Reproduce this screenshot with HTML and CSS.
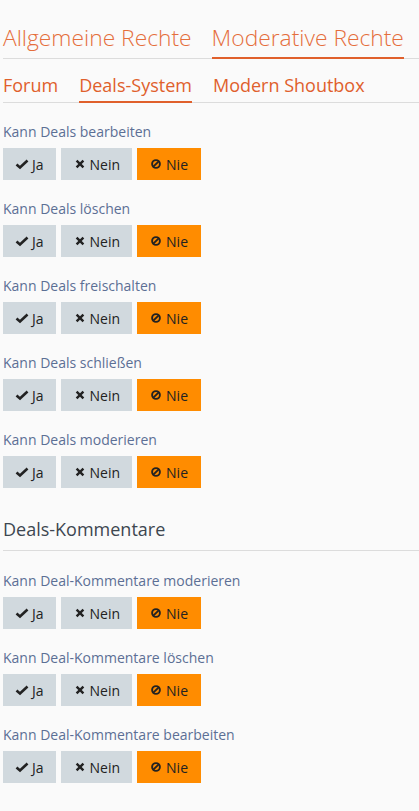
FILE: index.html
```html
<!DOCTYPE html>
<html lang="de">
<head>
<meta charset="utf-8">
<title>Rechte</title>
<link rel="stylesheet" href="styles.css">
</head>
<body>
<div class="page">
  <ul class="tabs tabs-main">
    <li class="tab">Allgemeine Rechte</li>
    <li class="tab active">Moderative Rechte</li>
  </ul>
  <ul class="tabs tabs-sub">
    <li class="tab">Forum</li>
    <li class="tab active">Deals-System</li>
    <li class="tab">Modern Shoutbox</li>
  </ul>

  <div class="section">
    <div class="perm">
      <div class="perm-label">Kann Deals bearbeiten</div>
      <div class="btns">
        <span class="btn"><svg class="ico" viewBox="0 0 14 14"><polyline points="1.5,7.5 5,10.5 12.5,3.5" fill="none" stroke="#222" stroke-width="2.6"/></svg>Ja</span>
        <span class="btn"><svg class="ico" viewBox="0 0 14 14"><path d="M3.6 3.6 L10.4 10.4 M10.4 3.6 L3.6 10.4" stroke="#222" stroke-width="2.4" fill="none"/></svg>Nein</span>
        <span class="btn btn-nie"><svg class="ico" viewBox="0 0 14 14"><circle cx="7" cy="7" r="3.9" fill="none" stroke="#222" stroke-width="1.9"/><path d="M4.3 9.7 L9.7 4.3" stroke="#222" stroke-width="1.9"/></svg>Nie</span>
      </div>
    </div>
    <div class="perm">
      <div class="perm-label">Kann Deals löschen</div>
      <div class="btns">
        <span class="btn"><svg class="ico" viewBox="0 0 14 14"><polyline points="1.5,7.5 5,10.5 12.5,3.5" fill="none" stroke="#222" stroke-width="2.6"/></svg>Ja</span>
        <span class="btn"><svg class="ico" viewBox="0 0 14 14"><path d="M3.6 3.6 L10.4 10.4 M10.4 3.6 L3.6 10.4" stroke="#222" stroke-width="2.4" fill="none"/></svg>Nein</span>
        <span class="btn btn-nie"><svg class="ico" viewBox="0 0 14 14"><circle cx="7" cy="7" r="3.9" fill="none" stroke="#222" stroke-width="1.9"/><path d="M4.3 9.7 L9.7 4.3" stroke="#222" stroke-width="1.9"/></svg>Nie</span>
      </div>
    </div>
    <div class="perm">
      <div class="perm-label">Kann Deals freischalten</div>
      <div class="btns">
        <span class="btn"><svg class="ico" viewBox="0 0 14 14"><polyline points="1.5,7.5 5,10.5 12.5,3.5" fill="none" stroke="#222" stroke-width="2.6"/></svg>Ja</span>
        <span class="btn"><svg class="ico" viewBox="0 0 14 14"><path d="M3.6 3.6 L10.4 10.4 M10.4 3.6 L3.6 10.4" stroke="#222" stroke-width="2.4" fill="none"/></svg>Nein</span>
        <span class="btn btn-nie"><svg class="ico" viewBox="0 0 14 14"><circle cx="7" cy="7" r="3.9" fill="none" stroke="#222" stroke-width="1.9"/><path d="M4.3 9.7 L9.7 4.3" stroke="#222" stroke-width="1.9"/></svg>Nie</span>
      </div>
    </div>
    <div class="perm">
      <div class="perm-label">Kann Deals schließen</div>
      <div class="btns">
        <span class="btn"><svg class="ico" viewBox="0 0 14 14"><polyline points="1.5,7.5 5,10.5 12.5,3.5" fill="none" stroke="#222" stroke-width="2.6"/></svg>Ja</span>
        <span class="btn"><svg class="ico" viewBox="0 0 14 14"><path d="M3.6 3.6 L10.4 10.4 M10.4 3.6 L3.6 10.4" stroke="#222" stroke-width="2.4" fill="none"/></svg>Nein</span>
        <span class="btn btn-nie"><svg class="ico" viewBox="0 0 14 14"><circle cx="7" cy="7" r="3.9" fill="none" stroke="#222" stroke-width="1.9"/><path d="M4.3 9.7 L9.7 4.3" stroke="#222" stroke-width="1.9"/></svg>Nie</span>
      </div>
    </div>
    <div class="perm">
      <div class="perm-label">Kann Deals moderieren</div>
      <div class="btns">
        <span class="btn"><svg class="ico" viewBox="0 0 14 14"><polyline points="1.5,7.5 5,10.5 12.5,3.5" fill="none" stroke="#222" stroke-width="2.6"/></svg>Ja</span>
        <span class="btn"><svg class="ico" viewBox="0 0 14 14"><path d="M3.6 3.6 L10.4 10.4 M10.4 3.6 L3.6 10.4" stroke="#222" stroke-width="2.4" fill="none"/></svg>Nein</span>
        <span class="btn btn-nie"><svg class="ico" viewBox="0 0 14 14"><circle cx="7" cy="7" r="3.9" fill="none" stroke="#222" stroke-width="1.9"/><path d="M4.3 9.7 L9.7 4.3" stroke="#222" stroke-width="1.9"/></svg>Nie</span>
      </div>
    </div>
  </div>

  <h3 class="section-title">Deals-Kommentare</h3>

  <div class="section">
    <div class="perm">
      <div class="perm-label">Kann Deal-Kommentare moderieren</div>
      <div class="btns">
        <span class="btn"><svg class="ico" viewBox="0 0 14 14"><polyline points="1.5,7.5 5,10.5 12.5,3.5" fill="none" stroke="#222" stroke-width="2.6"/></svg>Ja</span>
        <span class="btn"><svg class="ico" viewBox="0 0 14 14"><path d="M3.6 3.6 L10.4 10.4 M10.4 3.6 L3.6 10.4" stroke="#222" stroke-width="2.4" fill="none"/></svg>Nein</span>
        <span class="btn btn-nie"><svg class="ico" viewBox="0 0 14 14"><circle cx="7" cy="7" r="3.9" fill="none" stroke="#222" stroke-width="1.9"/><path d="M4.3 9.7 L9.7 4.3" stroke="#222" stroke-width="1.9"/></svg>Nie</span>
      </div>
    </div>
    <div class="perm">
      <div class="perm-label">Kann Deal-Kommentare löschen</div>
      <div class="btns">
        <span class="btn"><svg class="ico" viewBox="0 0 14 14"><polyline points="1.5,7.5 5,10.5 12.5,3.5" fill="none" stroke="#222" stroke-width="2.6"/></svg>Ja</span>
        <span class="btn"><svg class="ico" viewBox="0 0 14 14"><path d="M3.6 3.6 L10.4 10.4 M10.4 3.6 L3.6 10.4" stroke="#222" stroke-width="2.4" fill="none"/></svg>Nein</span>
        <span class="btn btn-nie"><svg class="ico" viewBox="0 0 14 14"><circle cx="7" cy="7" r="3.9" fill="none" stroke="#222" stroke-width="1.9"/><path d="M4.3 9.7 L9.7 4.3" stroke="#222" stroke-width="1.9"/></svg>Nie</span>
      </div>
    </div>
    <div class="perm">
      <div class="perm-label">Kann Deal-Kommentare bearbeiten</div>
      <div class="btns">
        <span class="btn"><svg class="ico" viewBox="0 0 14 14"><polyline points="1.5,7.5 5,10.5 12.5,3.5" fill="none" stroke="#222" stroke-width="2.6"/></svg>Ja</span>
        <span class="btn"><svg class="ico" viewBox="0 0 14 14"><path d="M3.6 3.6 L10.4 10.4 M10.4 3.6 L3.6 10.4" stroke="#222" stroke-width="2.4" fill="none"/></svg>Nein</span>
        <span class="btn btn-nie"><svg class="ico" viewBox="0 0 14 14"><circle cx="7" cy="7" r="3.9" fill="none" stroke="#222" stroke-width="1.9"/><path d="M4.3 9.7 L9.7 4.3" stroke="#222" stroke-width="1.9"/></svg>Nie</span>
      </div>
    </div>
  </div>
</div>
</body>
</html>
```

FILE: styles.css
```css
html, body {
  margin: 0;
  padding: 0;
  background: #fafafa;
}

body {
  font-family: "Open Sans", "Noto Sans", sans-serif;
  color: #333;
}

.page {
  padding-left: 3px;
}

.tabs {
  list-style: none;
  margin: 0;
  display: flex;
  border-bottom: 1px solid #dcdcdc;
}

.tab {
  color: #e0602c;
  border-bottom: 2px solid transparent;
  margin-bottom: -1px;
  white-space: nowrap;
  flex: none;
}

.tab.active {
  border-bottom-color: #e0602c;
}

.tabs-main {
  padding: 23px 0 0 0;
  gap: 20px;
}

.tabs-main .tab {
  font-size: 22.8px;
  font-weight: 300;
  color: #e56e3c;
  line-height: 29px;
  padding-bottom: 5px;
}

.tabs-main .tab.active {
  border-bottom-color: #e0602c;
}

.tabs-sub {
  padding: 14px 0 0 0;
  gap: 21px;
}

.tabs-sub .tab {
  font-size: 18px;
  line-height: 24px;
  padding-bottom: 4px;
}

.section {
  padding-top: 19px;
}

.perm {
  margin-bottom: 19px;
}

.perm-label {
  font-size: 14px;
  line-height: 20px;
  color: #5c6f95;
  margin-bottom: 6px;
}

.btns {
  display: flex;
  gap: 5px;
}

.btn {
  display: inline-flex;
  align-items: center;
  height: 32px;
  padding: 0 12px 0 12px;
  background: #d1d9de;
  color: #222;
  font-size: 14px;
  box-sizing: border-box;
}

.btn-nie {
  background: #ff8c00;
  padding-right: 13px;
}

.ico {
  width: 14px;
  height: 14px;
  margin-right: 3px;
  flex: none;
}

.section-title {
  margin: 28px 0 0 0;
  font-size: 18px;
  line-height: 26px;
  font-weight: 400;
  color: #3d4650;
  padding-bottom: 8px;
  border-bottom: 1px solid #dcdcdc;
}

.section-title + .section {
  padding-top: 20px;
}
```
